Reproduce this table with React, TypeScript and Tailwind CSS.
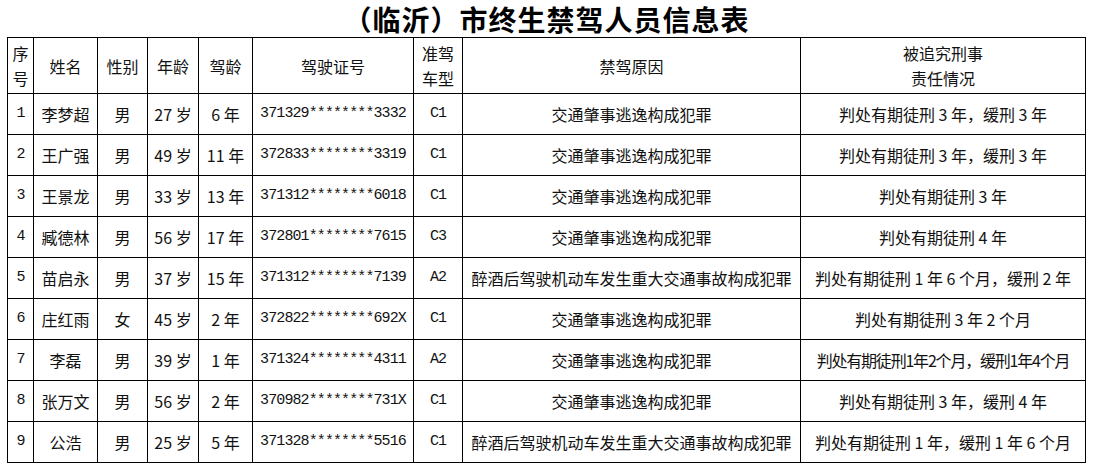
import React from 'react';

interface Row {
  no: number;
  name: string;
  sex: string;
  age: string;
  years: string;
  license: string;
  type: string;
  reason: string;
  penalty: string;
  tight?: boolean;
}

const rows: Row[] = [
  { no: 1, name: '李梦超', sex: '男', age: '27 岁', years: '6 年', license: '371329********3332', type: 'C1', reason: '交通肇事逃逸构成犯罪', penalty: '判处有期徒刑 3 年，缓刑 3 年' },
  { no: 2, name: '王广强', sex: '男', age: '49 岁', years: '11 年', license: '372833********3319', type: 'C1', reason: '交通肇事逃逸构成犯罪', penalty: '判处有期徒刑 3 年，缓刑 3 年' },
  { no: 3, name: '王景龙', sex: '男', age: '33 岁', years: '13 年', license: '371312********6018', type: 'C1', reason: '交通肇事逃逸构成犯罪', penalty: '判处有期徒刑 3 年' },
  { no: 4, name: '臧德林', sex: '男', age: '56 岁', years: '17 年', license: '372801********7615', type: 'C3', reason: '交通肇事逃逸构成犯罪', penalty: '判处有期徒刑 4 年' },
  { no: 5, name: '苗启永', sex: '男', age: '37 岁', years: '15 年', license: '371312********7139', type: 'A2', reason: '醉酒后驾驶机动车发生重大交通事故构成犯罪', penalty: '判处有期徒刑 1 年 6 个月，缓刑 2 年' },
  { no: 6, name: '庄红雨', sex: '女', age: '45 岁', years: '2 年', license: '372822********692X', type: 'C1', reason: '交通肇事逃逸构成犯罪', penalty: '判处有期徒刑 3 年 2 个月' },
  { no: 7, name: '李磊', sex: '男', age: '39 岁', years: '1 年', license: '371324********4311', type: 'A2', reason: '交通肇事逃逸构成犯罪', penalty: '判处有期徒刑1年2个月，缓刑1年4个月', tight: true },
  { no: 8, name: '张万文', sex: '男', age: '56 岁', years: '2 年', license: '370982********731X', type: 'C1', reason: '交通肇事逃逸构成犯罪', penalty: '判处有期徒刑 3 年，缓刑 4 年' },
  { no: 9, name: '公浩', sex: '男', age: '25 岁', years: '5 年', license: '371328********5516', type: 'C1', reason: '醉酒后驾驶机动车发生重大交通事故构成犯罪', penalty: '判处有期徒刑 1 年，缓刑 1 年 6 个月' },
];

const cell = 'border border-black text-center align-middle p-0 whitespace-nowrap';
const mono = "font-['Liberation_Mono',monospace] text-[15px] tracking-[-0.9px]";

export default function App() {
  return (
    <div className="w-[1093px] h-[468px] bg-white text-[#111] font-['Noto_Sans_CJK_SC','Noto_Sans',sans-serif] overflow-hidden">
      <h1 className="h-[37px] pt-[2px] text-center text-[28px] leading-[34px] tracking-[1px] font-bold text-black">（临沂）市终生禁驾人员信息表</h1>
      <div className="pl-[7px]">
        <table className="w-[1078px] table-fixed border-collapse text-[16px] leading-[24px]">
          <colgroup>
            <col className="w-[26px]" />
            <col className="w-[64px]" />
            <col className="w-[50px]" />
            <col className="w-[51px]" />
            <col className="w-[54px]" />
            <col className="w-[161px]" />
            <col className="w-[49px]" />
            <col className="w-[338px]" />
            <col className="w-[285px]" />
          </colgroup>
          <thead>
            <tr className="h-[56px]">
              <th className={`${cell} font-normal whitespace-normal leading-[25px]`}>序<br />号</th>
              <th className={`${cell} font-normal`}>姓名</th>
              <th className={`${cell} font-normal`}>性别</th>
              <th className={`${cell} font-normal`}>年龄</th>
              <th className={`${cell} font-normal`}>驾龄</th>
              <th className={`${cell} font-normal`}>驾驶证号</th>
              <th className={`${cell} font-normal leading-[25px]`}>准驾<br />车型</th>
              <th className={`${cell} font-normal`}>禁驾原因</th>
              <th className={`${cell} font-normal leading-[25px]`}>被追究刑事<br />责任情况</th>
            </tr>
          </thead>
          <tbody>
            {rows.map(r => (
              <tr key={r.no} className="h-[41px]">
                <td className={`${cell} ${mono}`}>{r.no}</td>
                <td className={cell}>{r.name}</td>
                <td className={cell}>{r.sex}</td>
                <td className={cell}>{r.age}</td>
                <td className={cell}>{r.years}</td>
                <td className={`${cell} ${mono}`}>{r.license}</td>
                <td className={`${cell} ${mono}`}>{r.type}</td>
                <td className={cell}>{r.reason}</td>
                <td className={`${cell} ${r.tight ? 'tracking-[-1.2px]' : ''}`}>{r.penalty}</td>
              </tr>
            ))}
          </tbody>
        </table>
      </div>
    </div>
  );
}
